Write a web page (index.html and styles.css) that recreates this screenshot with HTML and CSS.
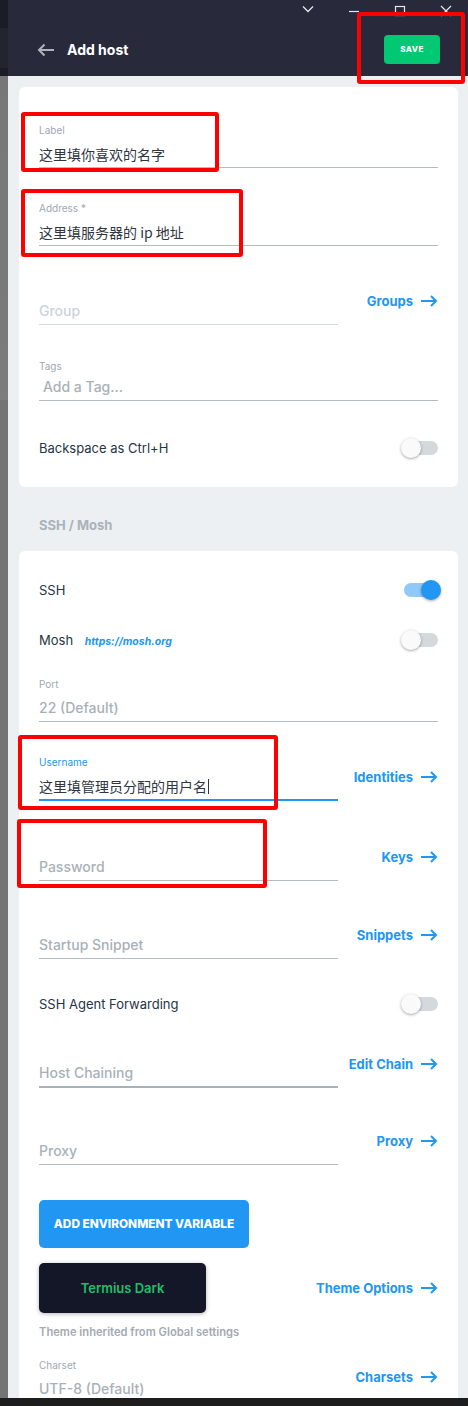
FILE: index.html
```html
<!DOCTYPE html>
<html>
<head>
<meta charset="UTF-8">
<title>Add host - Termius</title>
<link rel="stylesheet" href="styles.css">
</head>
<body>

<div class="window">
  <div class="sidestrip"></div>

  <div class="app">
    <div class="header">
      <div class="winctrl">
        <svg class="wc" width="12" height="8" viewBox="0 0 12 8"><path d="M1 1.5 L6 6.5 L11 1.5" fill="none" stroke="#e6e7ec" stroke-width="1.3"/></svg>
        <svg class="wc" width="12" height="12" viewBox="0 0 12 12"><path d="M1 6.5 H11" stroke="#e6e7ec" stroke-width="1.2"/></svg>
        <svg class="wc" width="12" height="12" viewBox="0 0 12 12"><rect x="1.5" y="1.5" width="9" height="9" fill="none" stroke="#e6e7ec" stroke-width="1.2"/></svg>
        <svg class="wc" width="12" height="12" viewBox="0 0 12 12"><path d="M1 1 L11 11 M11 1 L1 11" stroke="#e6e7ec" stroke-width="1.2"/></svg>
      </div>
      <div class="titlebar">
        <svg class="back" width="18" height="14" viewBox="0 0 18 14"><path d="M17 7 H2 M7.5 1.5 L2 7 L7.5 12.5" fill="none" stroke="#aeb2bd" stroke-width="2"/></svg>
        <span class="title">Add host</span>
        <span class="savebtn">SAVE</span>
      </div>
    </div>

    <div class="main">
      <div class="card">
        <div class="field first">
          <div class="flabel">Label</div>
          <div class="fvalue cjk">这里填你喜欢的名字</div>
        </div>
        <div class="field gap33">
          <div class="flabel">Address *</div>
          <div class="fvalue cjk">这里填服务器的 ip 地址</div>
        </div>
        <div class="row gap54">
          <div class="field short light">
            <div class="fvalue disabled">Group</div>
          </div>
          <span class="link">Groups <svg width="17" height="12" viewBox="0 0 17 12"><path d="M0 6 H15 M10 1 L15 6 L10 11" fill="none" stroke="#2196f3" stroke-width="2"/></svg></span>
        </div>
        <div class="field tags gap34">
          <div class="flabel">Tags</div>
          <div class="fvalue hint indent">Add a Tag...</div>
        </div>
        <div class="toggle-row gap35">
          <span>Backspace as Ctrl+H</span>
          <span class="toggle"><span class="knob"></span></span>
        </div>
        <div class="card-end"></div>
      </div>

      <div class="section">SSH / Mosh</div>

      <div class="card">
        <div class="toggle-row gap27">
          <span>SSH</span>
          <span class="toggle on"><span class="knob"></span></span>
        </div>
        <div class="toggle-row gap26">
          <span>Mosh <a class="mosh">https://mosh.org</a></span>
          <span class="toggle"><span class="knob"></span></span>
        </div>
        <div class="field gap25">
          <div class="flabel">Port</div>
          <div class="fvalue hint">22 (Default)</div>
        </div>
        <div class="row gap33">
          <div class="field short focused">
            <div class="flabel">Username</div>
            <div class="fvalue cjk">这里填管理员分配的用户名<span class="caret"></span></div>
          </div>
          <span class="link">Identities <svg width="17" height="12" viewBox="0 0 17 12"><path d="M0 6 H15 M10 1 L15 6 L10 11" fill="none" stroke="#2196f3" stroke-width="2"/></svg></span>
        </div>
        <div class="row gap55">
          <div class="field short">
            <div class="fvalue hint">Password</div>
          </div>
          <span class="link">Keys <svg width="17" height="12" viewBox="0 0 17 12"><path d="M0 6 H15 M10 1 L15 6 L10 11" fill="none" stroke="#2196f3" stroke-width="2"/></svg></span>
        </div>
        <div class="row gap53">
          <div class="field short">
            <div class="fvalue hint">Startup Snippet</div>
          </div>
          <span class="link">Snippets <svg width="17" height="12" viewBox="0 0 17 12"><path d="M0 6 H15 M10 1 L15 6 L10 11" fill="none" stroke="#2196f3" stroke-width="2"/></svg></span>
        </div>
        <div class="toggle-row gap33">
          <span>SSH Agent Forwarding</span>
          <span class="toggle"><span class="knob"></span></span>
        </div>
        <div class="row gap46">
          <div class="field short thick">
            <div class="fvalue hint">Host Chaining</div>
          </div>
          <span class="link">Edit Chain <svg width="17" height="12" viewBox="0 0 17 12"><path d="M0 6 H15 M10 1 L15 6 L10 11" fill="none" stroke="#2196f3" stroke-width="2"/></svg></span>
        </div>
        <div class="row gap52">
          <div class="field short">
            <div class="fvalue hint">Proxy</div>
          </div>
          <span class="link">Proxy <svg width="17" height="12" viewBox="0 0 17 12"><path d="M0 6 H15 M10 1 L15 6 L10 11" fill="none" stroke="#2196f3" stroke-width="2"/></svg></span>
        </div>
        <div class="envbtn">ADD ENVIRONMENT VARIABLE</div>
        <div class="theme-row">
          <div class="theme-tile">Termius Dark</div>
          <span class="link">Theme Options <svg width="17" height="12" viewBox="0 0 17 12"><path d="M0 6 H15 M10 1 L15 6 L10 11" fill="none" stroke="#2196f3" stroke-width="2"/></svg></span>
        </div>
        <div class="note">Theme inherited from Global settings</div>
        <div class="row charset">
          <div class="field short noline">
            <div class="flabel">Charset</div>
            <div class="fvalue hint">UTF-8 (Default)</div>
          </div>
          <span class="link">Charsets <svg width="17" height="12" viewBox="0 0 17 12"><path d="M0 6 H15 M10 1 L15 6 L10 11" fill="none" stroke="#2196f3" stroke-width="2"/></svg></span>
        </div>
      </div>
    </div>
  </div>
</div>
<div class="bottombar"></div>

<!-- red annotation boxes drawn over the screenshot -->
<div class="mark m-save"></div>
<div class="mark m-label"></div>
<div class="mark m-address"></div>
<div class="mark m-user"></div>
<div class="mark m-pass"></div>

</body>
</html>
```

FILE: styles.css
```css
body {
  margin: 0;
  width: 468px;
  height: 1406px;
  overflow: hidden;
  font-family: Inter, "Noto Sans", "Noto Sans CJK SC", sans-serif;
  color: #253545;
  position: relative;
}

.window {
  display: flex;
  height: 1398px;
  overflow: hidden;
}

.sidestrip {
  width: 8px;
  flex: none;
  background: linear-gradient(#1b1d26 0, #1b1d26 28px, #22252d 28px, #22252d 68px, #1b1d26 68px, #1b1d26 76px, #767877 76px, #7a7a7a 340px, #7d7d7d 400px, #737574 400px);
}

.app {
  flex: 1;
  display: flex;
  flex-direction: column;
  background: #edf0f2;
}

.header {
  height: 76px;
  flex: none;
  background: #282a3c;
}

.winctrl {
  display: flex;
  justify-content: flex-end;
  gap: 34px;
  padding: 5px 16px 0 0;
  height: 14px;
}

.wc {
  display: block;
}

.titlebar {
  display: flex;
  align-items: center;
  padding: 16px 28px 0 29px;
}

.back {
  display: block;
}

.title {
  margin-left: 12px;
  color: #ffffff;
  font-weight: 700;
  font-size: 14px;
  flex: 1;
}

.savebtn {
  width: 56px;
  height: 29px;
  line-height: 29px;
  border-radius: 4px;
  background: #00c873;
  color: #ffffff;
  font-size: 8px;
  font-weight: 800;
  letter-spacing: 0.5px;
  text-align: center;
}

.main {
  padding: 11px 10px 0 11px;
}

.card {
  display: flow-root;
  background: #ffffff;
  border-radius: 6px;
  padding: 0 20px;
}

.card-end {
  height: 27px;
}

.section {
  margin: 28px 0 16px 20px;
  line-height: 20px;
  font-size: 13px;
  font-weight: 700;
  color: #a9b3ba;
}

/* inputs with a floating label */
.field {
  border-bottom: 1px solid #b3bcc2;
  padding-bottom: 2px;
}

.field.first {
  margin-top: 36px;
}

.flabel {
  font-size: 10px;
  line-height: 14px;
  color: #9ea8b0;
  margin-bottom: 6px;
}

.fvalue {
  font-size: 14px;
  line-height: 22px;
  height: 22px;
  white-space: nowrap;
  color: #2f3640;
}

.cjk {
  font-family: "Noto Sans CJK SC", sans-serif;
  font-size: 14px;
}

.hint {
  color: #a8b1b8;
  font-weight: 500;
}

.disabled {
  color: #cdd3d8;
  font-weight: 500;
}

.indent {
  padding-left: 4px;
}

.tags .flabel {
  margin-bottom: 3px;
}

.short {
  width: 299px;
}

.light {
  border-bottom-color: #d3d9dd;
}

.focused {
  border-bottom: 2px solid #2196f3;
}

.focused .flabel {
  color: #2196f3;
}

.thick {
  border-bottom: 2px solid #a7b1b8;
}

.noline {
  border-bottom: none;
}

.caret {
  display: inline-block;
  width: 1px;
  height: 15px;
  background: #2f3640;
  vertical-align: -2px;
  margin-left: 1px;
}

.row {
  display: flex;
  justify-content: space-between;
  align-items: flex-end;
}

.link {
  display: flex;
  align-items: center;
  gap: 8px;
  font-size: 13px;
  font-weight: 700;
  line-height: 18px;
  color: #2196f3;
  margin-top: -22px;
  margin-bottom: 15px;
  white-space: nowrap;
}

.link svg {
  display: block;
}

.toggle-row {
  display: flex;
  justify-content: space-between;
  align-items: center;
  height: 24px;
  font-size: 13px;
  color: #253545;
}

.mosh {
  margin-left: 8px;
  font-size: 10.5px;
  font-weight: 700;
  font-style: italic;
  color: #2196f3;
}

.toggle {
  position: relative;
  width: 40px;
  height: 20px;
  margin-right: -3px;
}

.toggle::before {
  content: "";
  position: absolute;
  left: 3px;
  top: 3px;
  width: 34px;
  height: 14px;
  border-radius: 7px;
  background: #d4d9dd;
}

.knob {
  position: absolute;
  left: 0;
  top: 0;
  width: 20px;
  height: 20px;
  border-radius: 50%;
  background: #fafafa;
  box-shadow: 0 1px 3px rgba(0, 0, 0, 0.35);
}

.toggle.on::before {
  background: #90c9f9;
}

.toggle.on .knob {
  left: 20px;
  background: #2196f3;
}

.gap25 { margin-top: 25px; }
.gap26 { margin-top: 26px; }
.gap27 { margin-top: 27px; }
.gap33 { margin-top: 33px; }
.gap34 { margin-top: 34px; }
.gap35 { margin-top: 35px; }
.gap46 { margin-top: 46px; }
.gap52 { margin-top: 52px; }
.gap53 { margin-top: 53px; }
.gap54 { margin-top: 54px; }
.gap55 { margin-top: 55px; }

.envbtn {
  margin-top: 35px;
  width: 210px;
  height: 48px;
  line-height: 48px;
  border-radius: 5px;
  background: #2196f3;
  color: #ffffff;
  font-size: 11.8px;
  font-weight: 800;
  text-align: center;
}

.theme-row {
  margin-top: 15px;
  display: flex;
  justify-content: space-between;
  align-items: center;
}

.theme-row .link {
  margin: 0;
}

.theme-tile {
  width: 167px;
  height: 50px;
  line-height: 50px;
  border-radius: 5px;
  background: #141728;
  color: #1fbf6a;
  font-size: 13px;
  font-weight: 600;
  text-align: center;
  box-shadow: 0 1px 4px rgba(0, 0, 0, 0.3);
}

.note {
  margin-top: 11px;
  line-height: 16px;
  font-size: 11.2px;
  font-weight: 600;
  color: #a2aab2;
}

.charset {
  margin-top: 18px;
  padding-bottom: 20px;
}

.charset .link {
  margin-bottom: 16px;
}

.bottombar {
  height: 8px;
  background: #1d1d1d;
}

.mark {
  position: absolute;
  border: 4px solid #ff0000;
  border-radius: 3px;
  box-sizing: border-box;
}

.m-save { left: 357px; top: 12px; width: 108px; height: 72px; }
.m-label { left: 21px; top: 112px; width: 198px; height: 60px; }
.m-address { left: 21px; top: 189px; width: 222px; height: 68px; }
.m-user { left: 18px; top: 735px; width: 260px; height: 75px; }
.m-pass { left: 17px; top: 819px; width: 250px; height: 69px; }
```
